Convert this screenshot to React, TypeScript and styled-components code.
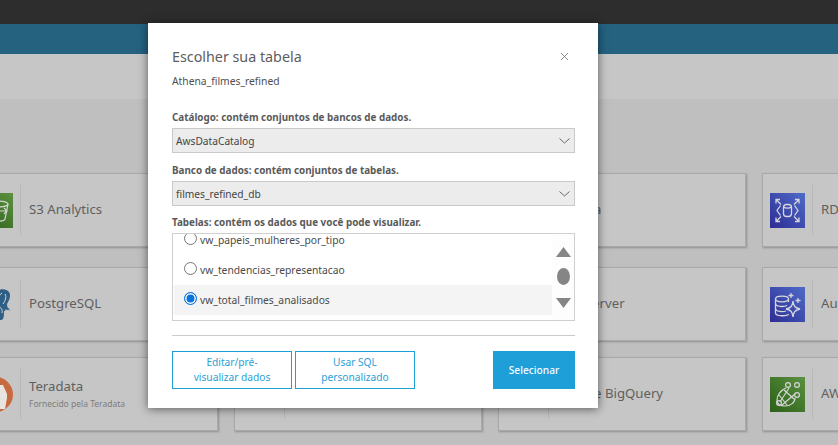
import styled, { createGlobalStyle } from "styled-components";

const GlobalStyle = createGlobalStyle`
    html, body { margin: 0; padding: 0; }
    body {
        width: 838px;
        height: 445px;
        overflow: hidden;
        background: #bfbfbf;
        font-family: "Noto Sans", "Open Sans", sans-serif;
    }
`;

const Page = styled.div`
    position: relative;
    width: 838px;
    height: 445px;
    overflow: hidden;
`;

const TopBar = styled.div`
    height: 24px;
    background: #2d2d2d;
`;

const BlueBar = styled.div`
    height: 30px;
    background: #246280;
`;

const SubHeader = styled.div`
    height: 45px;
    background: #c6c6c6;
`;

const Content = styled.main`
    padding-top: 74px;
    margin-left: -30px;
    width: 1100px;
`;

const CardRow = styled.div<{ $gap: number }>`
    display: flex;
    gap: 16px;
    margin-bottom: ${(p) => p.$gap}px;
`;

const Card = styled.div`
    box-sizing: border-box;
    flex: none;
    display: flex;
    align-items: center;
    width: 248px;
    height: 74px;
    padding: 0 7px;
    background: #c6c6c6;
    border: 1px solid #a9a9a9;
    box-shadow: 1px 1px 2px rgba(0, 0, 0, 0.25);
`;

const IconSlot = styled.div`
    flex: none;
    width: 35px;
    height: 35px;
    margin-right: 7px;
    svg { display: block; }
`;

const CardText = styled.div`
    box-sizing: border-box;
    display: flex;
    flex-direction: column;
    gap: 3px;
    height: 50px;
    justify-content: center;
    padding: 0 0 2px 8px;
    border-left: 1px solid #b8b8b8;
    color: #5f5f5f;
`;

const CardName = styled.div`
    font-size: 13.2px;
    line-height: 18px;
    white-space: nowrap;
`;

const CardNote = styled.div`
    font-size: 8.5px;
    line-height: 12px;
    color: #7d7d7d;
    white-space: nowrap;
`;

const Modal = styled.section`
    position: absolute;
    left: 148px;
    top: 23px;
    box-sizing: border-box;
    width: 450px;
    height: 385px;
    padding: 0 23px 0 24px;
    background: #fff;
    box-shadow: 0 1px 9px rgba(0, 0, 0, 0.55);
    color: #545b64;
`;

const ModalHead = styled.div`
    display: flex;
    align-items: center;
    justify-content: space-between;
    height: 20px;
    padding-top: 24px;
`;

const Title = styled.h2`
    margin: 0;
    font-size: 14.3px;
    font-weight: 400;
    line-height: 20px;
    color: #5d5d5d;
`;

const CloseButton = styled.button`
    width: 9px;
    height: 9px;
    margin: 0 6px 2px 0;
    padding: 0;
    border: 0;
    background: none;
    svg { display: block; }
`;

const Subtitle = styled.div`
    margin-top: 7px;
    margin-bottom: 22px;
    font-size: 10.3px;
    line-height: 14px;
    color: #4f4f4f;
`;

const FieldLabel = styled.div`
    font-size: 9.85px;
    font-weight: 700;
    line-height: 14px;
    color: #5a5a5a;
`;

const SelectBox = styled.div<{ $gap: number }>`
    box-sizing: border-box;
    display: flex;
    align-items: center;
    justify-content: space-between;
    height: 25px;
    margin-top: 4px;
    margin-bottom: ${(p) => p.$gap}px;
    padding: 0 4px 0 3px;
    background: #ececec;
    border: 1px solid #c9c9c9;
    font-size: 10.2px;
    color: #454545;
`;

const ListBox = styled.div`
    box-sizing: border-box;
    display: flex;
    height: 88px;
    margin-top: 4px;
    padding-left: 1px;
    border: 1px solid #cfcfcf;
    overflow: hidden;
`;

const ListItems = styled.div`
    flex: 1;
    margin-top: -9px;
`;

const ListRow = styled.div<{ $selected?: boolean }>`
    display: flex;
    align-items: center;
    height: 30px;
    padding-left: 10px;
    background: ${(p) => (p.$selected ? "#f4f4f4" : "transparent")};
    font-size: 10.3px;
    color: #4a4a4a;
`;

const Radio = styled.span<{ $checked?: boolean }>`
    box-sizing: border-box;
    flex: none;
    width: 13px;
    height: 13px;
    margin: 0 3px 3px 0;
    border-radius: 50%;
    border: 1px solid ${(p) => (p.$checked ? "#0a74da" : "#767676")};
    background: ${(p) => (p.$checked ? "#0a74da" : "#fff")};
    box-shadow: ${(p) => (p.$checked ? "inset 0 0 0 1.5px #fff" : "none")};
`;

const ScrollTrack = styled.div`
    flex: none;
    display: flex;
    flex-direction: column;
    align-items: center;
    width: 22px;
    padding-top: 13px;
    background: #fdfdfd;
    svg { display: block; }
`;

const ScrollThumb = styled.div`
    width: 13px;
    height: 17px;
    margin: 11px 0 13px;
    border-radius: 50%;
    background: #858585;
`;

const Divider = styled.hr`
    height: 1px;
    margin: 14px 0 15px;
    border: 0;
    background: #cbcbcb;
`;

const Actions = styled.div`
    display: flex;
    gap: 3px;
`;

const OutlineButton = styled.button`
    box-sizing: border-box;
    width: 120px;
    height: 38px;
    padding: 0 16px;
    background: #fff;
    border: 1px solid #1f9fd8;
    font-family: inherit;
    font-size: 10.2px;
    line-height: 15px;
    color: #2ba0d6;
`;

const PrimaryButton = styled.button`
    box-sizing: border-box;
    width: 82px;
    height: 38px;
    margin-left: auto;
    background: #1f9fd8;
    border: 0;
    font-family: inherit;
    font-size: 10.2px;
    font-weight: 500;
    color: #f4fbff;
`;

const Chevron = () => (
    <svg width="11" height="6" viewBox="0 0 11 6" fill="none" stroke="#5a5a5a" strokeWidth="0.9">
        <path d="M0.5 0.5 L5.5 5 L10.5 0.5" />
    </svg>
);

const S3Icon = () => (
    <svg width="35" height="35" viewBox="0 0 35 35">
        <defs>
            <linearGradient id="greenA" x1="0" y1="1" x2="1" y2="0">
                <stop offset="0" stopColor="#2a6018" />
                <stop offset="1" stopColor="#5c9140" />
            </linearGradient>
        </defs>
        <rect width="35" height="35" fill="url(#greenA)" />
        <g fill="none" stroke="#d4d4d4" strokeWidth="1.2">
            <ellipse cx="20" cy="11" rx="10" ry="3" />
            <path d="M10 11 L13 26 C14 29 26 29 27 26 L30 11" />
            <path d="M14 18 H29 M26 15 L29 18 L26 21" />
        </g>
    </svg>
);

const PostgresIcon = () => (
    <svg width="35" height="35" viewBox="0 0 35 35">
        <path
            d="M9 3 C3 3 1 9 2 15 C3 21 6 28 9 28 C12 28 12 24 13 23 C15 26 18 33 23 33 C26 33 26 28 26 24 C29 24 33 24 33 22 C30 22 29 20 29 17 C32 12 33 8 31 5 C28 1 22 2 19 4 C16 2 12 3 9 3 Z"
            fill="#2f5f84"
        />
        <path
            d="M24 6 C21 8 19 12 21 18 C22 22 25 21 24 26 M27 7 C29 10 27 14 25 17 M27 23 C30 24 32 23 33 22"
            fill="none"
            stroke="#d8d8d8"
            strokeWidth="1"
        />
    </svg>
);

const TeradataIcon = () => (
    <svg width="35" height="35" viewBox="0 0 35 35">
        <circle cx="17.5" cy="17.5" r="17.5" fill="#c86a3f" />
        <path d="M10 8 H25 L29 17 V21 L27 32 H10 Z" fill="#e8e4e0" />
    </svg>
);

const RdsIcon = () => (
    <svg width="35" height="35" viewBox="0 0 35 35">
        <defs>
            <linearGradient id="blueA" x1="0" y1="1" x2="1" y2="0">
                <stop offset="0" stopColor="#2d2d94" />
                <stop offset="1" stopColor="#4f6bc8" />
            </linearGradient>
        </defs>
        <rect width="35" height="35" fill="url(#blueA)" />
        <g fill="none" stroke="#d6d6dc" strokeWidth="1.3">
            <rect x="13.5" y="11.5" width="8" height="12" rx="3" />
            <path d="M13.5 14 C15.5 15.5 19.5 15.5 21.5 14" />
            <path d="M10.5 12.5 L7 17.5 L10.5 22.5 M24.5 12.5 L28 17.5 L24.5 22.5" />
            <path d="M6 10.5 V6.5 H10 M6.5 7 L11 11.5" />
            <path d="M29 10.5 V6.5 H25 M28.5 7 L24 11.5" />
            <path d="M6 24.5 V28.5 H10 M6.5 28 L11 23.5" />
            <path d="M29 24.5 V28.5 H25 M28.5 28 L24 23.5" />
        </g>
    </svg>
);

const AuroraIcon = () => (
    <svg width="35" height="35" viewBox="0 0 35 35">
        <rect width="35" height="35" fill="url(#blueA)" />
        <g fill="none" stroke="#d6d6dc" strokeWidth="1.3">
            <ellipse cx="12" cy="12" rx="6.5" ry="2.8" />
            <path d="M5.5 12 V26 C5.5 29.5 18.5 29.5 18.5 27" />
            <path d="M5.5 16.5 C5.5 20 14 20 17 18.5" />
            <path d="M5.5 21.5 C5.5 25 13 25 16 24" />
            <path d="M18.5 12 V15" />
            <path d="M23 14 C23.5 19 25 21 30 22 C25 23 23.5 25 23 30 C22.5 25 21 23 16 22 C21 21 22.5 19 23 14 Z" />
            <path d="M21 6 V11 M18.5 8.5 H23.5 M28 11 V16 M25.5 13.5 H30.5" />
        </g>
    </svg>
);

const IotIcon = () => (
    <svg width="35" height="35" viewBox="0 0 35 35">
        <rect width="35" height="35" fill="url(#greenA)" />
        <g fill="none" stroke="#d6d6d6" strokeWidth="1.2">
            <path d="M16 11 C11 13 7 18 7 23 C7 28 11 29 15 29 C20 29 25 26 25 21" />
            <path d="M10 25 L19 11 M12 28 L25 17 M9 18 L17 28 M14 13 L24 22" />
            <circle cx="18" cy="8" r="2.4" />
            <circle cx="27" cy="8" r="2.4" />
            <circle cx="27" cy="18" r="2.4" />
            <circle cx="9" cy="26" r="2.4" />
        </g>
    </svg>
);

// second and third column sit behind the dialog, so they carry only what peeks out
const rows = [
    {
        gap: 20,
        cards: [
            { id: "s3", name: "S3 Analytics", icon: <S3Icon /> },
            { id: "r1c2" },
            { id: "athena", name: "Athena" },
            { id: "rds", name: "RDS", icon: <RdsIcon /> },
        ],
    },
    {
        gap: 16,
        cards: [
            { id: "postgres", name: "PostgreSQL", icon: <PostgresIcon /> },
            { id: "r2c2" },
            { id: "sqlserver", name: "SQL Server" },
            { id: "aurora", name: "Aurora", icon: <AuroraIcon /> },
        ],
    },
    {
        gap: 0,
        cards: [
            { id: "teradata", name: "Teradata", note: "Fornecido pela Teradata", icon: <TeradataIcon /> },
            { id: "r3c2" },
            { id: "bigquery", name: "Google BigQuery" },
            { id: "iot", name: "AWS IoT Analytics", icon: <IotIcon /> },
        ],
    },
];

const App = () => (
    <Page>
        <GlobalStyle />
        <TopBar />
        <BlueBar />
        <SubHeader />
        <Content>
            {rows.map((row) => (
                <CardRow key={row.cards[0].id} $gap={row.gap}>
                    {row.cards.map((card) => (
                        <Card key={card.id}>
                            <IconSlot>{card.icon}</IconSlot>
                            <CardText>
                                {card.name && <CardName>{card.name}</CardName>}
                                {card.note && <CardNote>{card.note}</CardNote>}
                            </CardText>
                        </Card>
                    ))}
                </CardRow>
            ))}
        </Content>
        <Modal>
            <ModalHead>
                <Title>Escolher sua tabela</Title>
                <CloseButton aria-label="Fechar">
                    <svg width="9" height="9" viewBox="0 0 9 9" stroke="#6a6a6a" strokeWidth="0.8">
                        <path d="M1 1 L8 8 M8 1 L1 8" />
                    </svg>
                </CloseButton>
            </ModalHead>
            <Subtitle>Athena_filmes_refined</Subtitle>
            <FieldLabel>Catálogo: contém conjuntos de bancos de dados.</FieldLabel>
            <SelectBox $gap={10}>
                AwsDataCatalog
                <Chevron />
            </SelectBox>
            <FieldLabel>Banco de dados: contém conjuntos de tabelas.</FieldLabel>
            <SelectBox $gap={9}>
                filmes_refined_db
                <Chevron />
            </SelectBox>
            <FieldLabel>Tabelas: contém os dados que você pode visualizar.</FieldLabel>
            <ListBox>
                <ListItems>
                    <ListRow><Radio />vw_papeis_mulheres_por_tipo</ListRow>
                    <ListRow><Radio />vw_tendencias_representacao</ListRow>
                    <ListRow $selected><Radio $checked />vw_total_filmes_analisados</ListRow>
                </ListItems>
                <ScrollTrack>
                    <svg width="15" height="10" viewBox="0 0 15 10" fill="#858585">
                        <path d="M7.5 0 L15 10 H0 Z" />
                    </svg>
                    <ScrollThumb />
                    <svg width="15" height="10" viewBox="0 0 15 10" fill="#858585">
                        <path d="M0 0 H15 L7.5 10 Z" />
                    </svg>
                </ScrollTrack>
            </ListBox>
            <Divider />
            <Actions>
                <OutlineButton>Editar/pré-visualizar dados</OutlineButton>
                <OutlineButton>Usar SQL personalizado</OutlineButton>
                <PrimaryButton>Selecionar</PrimaryButton>
            </Actions>
        </Modal>
    </Page>
);

export default App;
